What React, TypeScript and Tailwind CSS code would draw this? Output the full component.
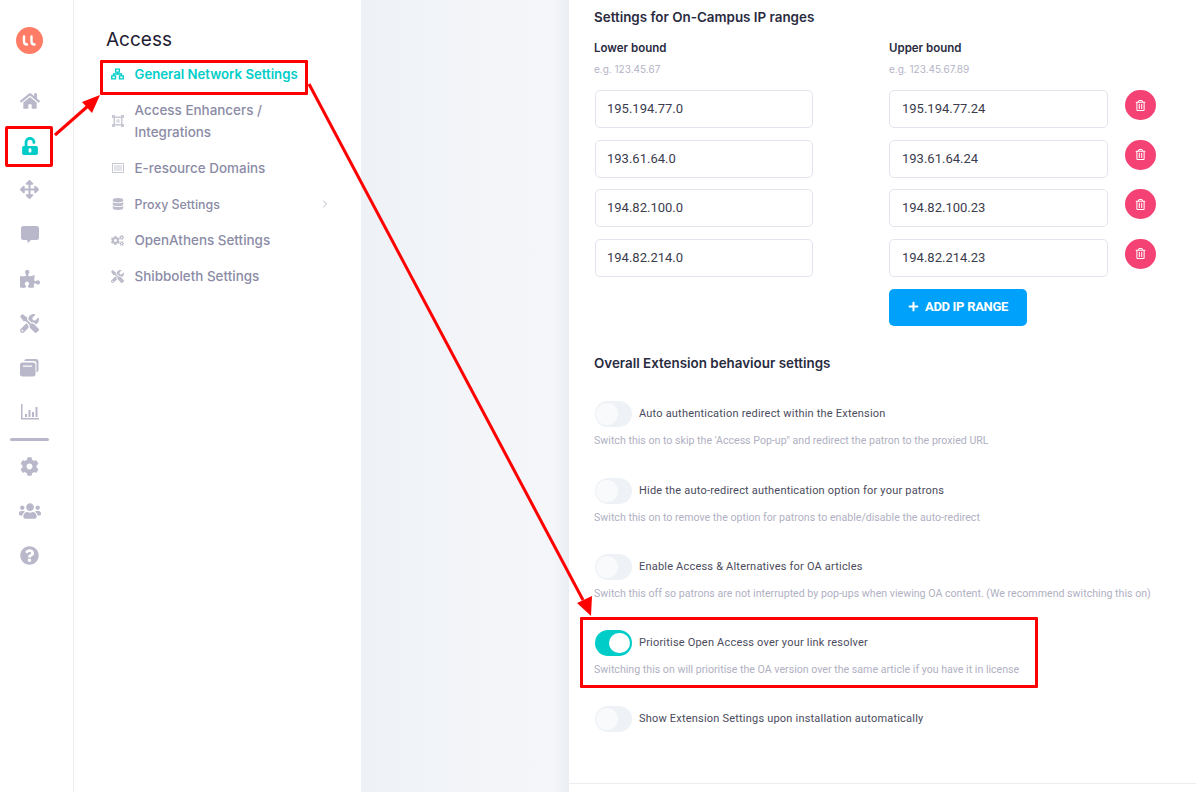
import React from "react";
import { FaHome, FaUnlockAlt, FaArrowsAlt, FaPuzzlePiece, FaTools, FaCog, FaUsers, FaQuestionCircle, FaDatabase, FaCogs, FaRegTrashAlt, FaPlus } from "react-icons/fa";
import { ChevronRight } from "lucide-react";

const Restore = () => (
  <svg width="19" height="19" viewBox="0 0 19 19" fill="currentColor">
    <path d="M6 1h10a2.500 2.500 0 0 1 2.500 2.500V12a2.500 2.500 0 0 1-2 2.400V5.500A2.500 2.500 0 0 0 14 3H4.200A2.500 2.500 0 0 1 6 1z" />
    <path fillRule="evenodd" d="M2.500 4.500h10.500a2.500 2.500 0 0 1 2.500 2.500v9a2.500 2.500 0 0 1-2.500 2.500H2.500A2.500 2.500 0 0 1 0 16V7a2.500 2.500 0 0 1 2.500-2.500zM3 7.500v1.300h9V7.500z" />
  </svg>
);
const Chart = () => (
  <svg width="18" height="16" viewBox="0 0 18 16" fill="currentColor">
    <path d="M0 0h1.500v14H18v1.500H0z" />
    <path d="M4 10h2v3H4zM7.500 6h2v7h-2zM11 8h2v5h-2zM14.500 3h2v10h-2z" />
  </svg>
);
const Comment = () => (
  <svg width="18" height="17" viewBox="0 0 18 17" fill="currentColor">
    <path d="M2.500 0h13A2.500 2.500 0 0 1 18 2.500v9a2.500 2.500 0 0 1-2.500 2.500H10l-3 3-1-3H2.500A2.500 2.500 0 0 1 0 11.500v-9A2.500 2.500 0 0 1 2.500 0z" />
  </svg>
);
const Net = () => (
  <svg width="14" height="12" viewBox="0 0 14 12" fill="none" stroke="currentColor" strokeWidth="1.500">
    <path d="M5 .8h4v3.200H5zM.8 8h4v3.200h-4zM9.200 8h4v3.200h-4z" />
    <path d="M7 4v2H2.700v2M7 6h4.300v2" />
  </svg>
);
const Enhancer = () => (
  <svg width="12" height="12" viewBox="0 0 12 12" fill="currentColor" opacity=".8">
    <path fillRule="evenodd" d="M0 0h3v1.500h6V0h3v3h-1.500v6H12v3H9v-1.500H3V12H0V9h1.500V3H0zM3 3v6h6V3z" />
    <circle cx="6" cy="6" r="2" opacity=".6" />
  </svg>
);
const ListBox = () => (
  <svg width="12" height="12" viewBox="0 0 12 12" fill="currentColor" opacity=".8">
    <path fillRule="evenodd" d="M0 1h12v10H0zM1 2v8h10V2z" />
    <path d="M2 3.500h8v1H2zM2 5.500h8v1H2zM2 7.500h8v1H2z" />
  </svg>
);

const ips = [
  ["195.194.77.0", "195.194.77.24"],
  ["193.61.64.0", "193.61.64.24"],
  ["194.82.100.0", "194.82.100.23"],
  ["194.82.214.0", "194.82.214.23"],
];

const toggles = [
  { t: "Auto authentication redirect within the Extension", d: "Switch this on to skip the 'Access Pop-up\" and redirect the patron to the proxied URL", on: false },
  { t: "Hide the auto-redirect authentication option for your patrons", d: "Switch this on to remove the option for patrons to enable/disable the auto-redirect", on: false },
  { t: "Enable Access & Alternatives for OA articles", d: "Switch this off so patrons are not interrupted by pop-ups when viewing OA content. (We recommend switching this on)", on: false },
  { t: "Prioritise Open Access over your link resolver", d: "Switching this on will prioritise the OA version over the same article if you have it in license", on: true },
  { t: "Show Extension Settings upon installation automatically", d: "", on: false },
];

const Side = ({ children, active }: { children: React.ReactNode; active?: boolean }) => (
  <div className={`w-[37px] h-[44.400px] flex items-center justify-center text-[19px] ${active ? "text-[#00cdc8]" : "text-[#b9b8ca]"}`}>{children}</div>
);

const Item = ({ icon, label, active, chevron, h = 36 }: { icon: React.ReactNode; label: React.ReactNode; active?: boolean; chevron?: boolean; h?: number }) => (
  <div className="flex items-center" style={{ height: h }}>
    <div className={`w-[13px] flex justify-center text-[13px] ${active ? "text-[#00cdc8]" : "text-[#bcbccb]"}`}>{icon}</div>
    <div className={`ml-[10.500px] leading-[22px] flex-1 ${active ? "text-[13.200px] text-[#00cdc8] font-semibold" : "text-[13.450px] text-[#8b8ba6] font-medium"}`}>{label}</div>
    {chevron && <ChevronRight size={12} strokeWidth={1.300} className="text-[#8b8ba6] -mr-[2px]" />}
  </div>
);

export default function App() {
  return (
    <div className="relative flex w-[1196px] h-[792px] overflow-hidden bg-white font-['Inter',sans-serif]">
      <aside className="w-[74px] h-full shrink-0 border-r border-[#ececf1] flex flex-col items-center pt-[27px] pr-[14px]">
        <div className="w-[27px] h-[27px] rounded-full bg-[#ff7d66] flex items-center justify-center mb-[25px]">
          <svg width="15" height="11" viewBox="0 0 15 11" fill="none" stroke="#fff" strokeWidth="2.400" strokeLinecap="round"><path d="M2 1.500v5q0 3 3 3M9.500 1.500v5q0 3 3 3" /></svg>
        </div>
        <Side><FaHome className="text-[20px]" /></Side>
        <Side active><FaUnlockAlt className="text-[18px]" /></Side>
        <Side><FaArrowsAlt /></Side>
        <Side><Comment /></Side>
        <Side><FaPuzzlePiece className="text-[20px]" /></Side>
        <Side><FaTools /></Side>
        <Side><Restore /></Side>
        <Side><Chart /></Side>
        <div className="w-[39px] h-[3px] bg-[#b9b8ca] rounded-full mt-[4px] mb-[3px]" />
        <Side><FaCog /></Side>
        <Side><FaUsers className="text-[22px]" /></Side>
        <Side><FaQuestionCircle /></Side>
      </aside>

      <nav className="w-[287px] h-full shrink-0 pl-[32px] pr-[32px] pt-[28px]">
        <h1 className="text-[19px] leading-[24px] text-[#1f2033] font-normal mb-[4px]">Access</h1>
        <div className="pl-[5px]">
          <Item active icon={<Net />} label="General Network Settings" h={36} />
          <Item icon={<Enhancer />} label={<>Access Enhancers /<br />Integrations</>} h={58} />
          <Item icon={<ListBox />} label="E-resource Domains" h={36} />
          <Item icon={<FaDatabase className="text-[12px]" />} label={<span className="text-[12.400px]">Proxy Settings</span>} chevron h={36} />
          <Item icon={<FaCogs />} label="OpenAthens Settings" h={36} />
          <Item icon={<FaTools />} label="Shibboleth Settings" h={36} />
        </div>
      </nav>

      <div className="w-[208px] h-full shrink-0 bg-[linear-gradient(to_right,#eef1f5,#f3f5f9_60%,#f4f6f9_92%,#ebeef3)]" />

      <main className="flex-1 h-full pl-[25px] pt-[8px]">
        <h2 className="text-[13.400px] leading-[18px] font-semibold text-[#2a2b3f]">Settings for On-Campus IP ranges</h2>
        <div className="flex text-[11.500px] font-semibold text-[#2a2b3f] mt-[14px] leading-[16px]">
          <div className="w-[295px]">Lower bound</div>
          <div>Upper bound</div>
        </div>
        <div className="flex text-[10px] text-[#b4b4c6] mt-[5px] leading-[16px]">
          <div className="w-[295px]">e.g. 123.45.67</div>
          <div>e.g. 123.45.67.89</div>
        </div>
        <div className="mt-[13px] flex flex-col gap-[11.600px] font-['Roboto',sans-serif]">
          {ips.map(([a, b]) => (
            <div key={a} className="flex items-start">
              <div className="w-[218px] h-[38px] ml-[1px] border border-[#e4e4ef] rounded-[5px] flex items-center pl-[11px] text-[13px] text-[#3b3c4e]">{a}</div>
              <div className="w-[219px] h-[38px] ml-[76px] border border-[#e4e4ef] rounded-[5px] flex items-center pl-[12px] text-[13px] text-[#3b3c4e]">{b}</div>
              <div className="w-[31px] h-[30px] ml-[17px] rounded-full bg-[#f54275] flex items-center justify-center text-[11px] text-white"><FaRegTrashAlt /></div>
            </div>
          ))}
        </div>
        <button className="mt-[12px] ml-[295px] w-[138px] h-[37px] pb-[1px] rounded-[5px] bg-[#00a1fb] text-white flex items-center justify-center gap-[6px] font-['Roboto',sans-serif] font-bold text-[13px] tracking-[-0.300px]">
          <FaPlus className="text-[11px]" />ADD IP RANGE
        </button>
        <h2 className="mt-[28px] text-[13.400px] leading-[18px] font-semibold text-[#2a2b3f]">Overall Extension behaviour settings</h2>
        <div className="mt-[29px] font-['Roboto',sans-serif]">
          {toggles.map((x, i) => (
            <div key={x.t} className={i === 0 ? "h-[77px]" : "h-[76px]"}>
              <div className="flex items-center h-[26px] ml-[1px]">
                <div className={`w-[37px] h-[26px] rounded-full relative ${x.on ? "bg-[#00cdc8]" : "bg-[#eef1f5]"}`}>
                  <div className={x.on ? "absolute top-[3px] right-[2px] w-[21px] h-[20px] rounded-full bg-white" : "absolute top-[2px] left-[1px] w-[22px] h-[22px] rounded-full bg-[#f9fafb]"} />
                </div>
                <div className="ml-[7px] text-[11px] tracking-[0.200px] text-[#4a4b5c]">{x.t}</div>
              </div>
              <div className="mt-[7px] text-[10.630px] leading-[14px] text-[#b0b0c2]">{x.d}</div>
            </div>
          ))}
        </div>
      </main>

      <div className="absolute left-[569px] right-0 top-[783px] h-px bg-[#ececf1]" />

      <div className="absolute left-[5px] top-[126px] w-[48px] h-[41px] border-[3px] border-[#ff0000] rounded-[2px]" />
      <div className="absolute left-[100px] top-[60px] w-[208px] h-[35px] border-[3px] border-[#ff0000] rounded-[1px]" />
      <div className="absolute left-[580px] top-[617px] w-[458px] h-[71px] border-[3px] border-[#ff0000] rounded-[1px]" />
      <svg className="absolute left-0 top-0 pointer-events-none" width="1196" height="792" viewBox="0 0 1196 792">
        <line x1="55" y1="135" x2="88" y2="106" stroke="#ff0000" strokeWidth="3" />
        <polygon points="100,95 92,113 82,102" fill="#ff0000" />
        <line x1="309" y1="84" x2="583" y2="600" stroke="#ff0000" strokeWidth="3" />
        <polygon points="591,616 577,603 592,596" fill="#ff0000" />
      </svg>
    </div>
  );
}
